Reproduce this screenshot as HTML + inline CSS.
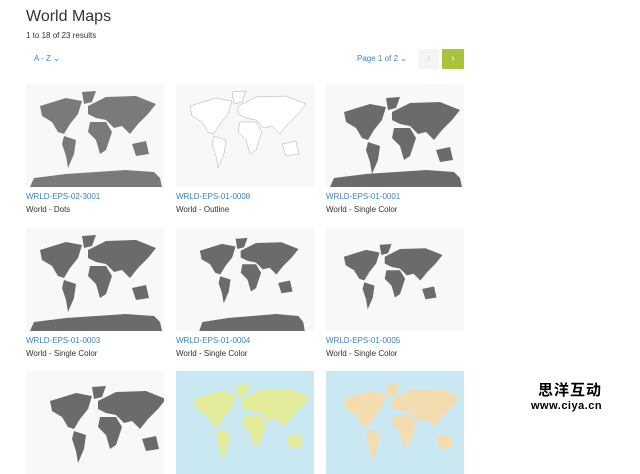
<!DOCTYPE html>
<html><head><meta charset="utf-8"><style>
body{margin:0;width:640px;height:421px;background:#fff;font-family:"Liberation Sans",sans-serif;overflow:hidden;position:relative}
.a{position:absolute}
h1{position:absolute;left:26px;top:8px;margin:0;font-size:16px;font-weight:normal;color:#333}
.card{position:absolute;width:138px}
.img{width:138px;height:103px;background:#f7f8f8;overflow:hidden}
.code{color:#3b82c6;font-size:8px;margin-top:5px}
.title{color:#333;font-size:8px;margin-top:4px}
svg{display:block}
</style></head><body>
<svg width="0" height="0" style="position:absolute">
<defs>
<g id="w">
<path d="M14,22 L40,14 L56,17 L52,30 L44,40 L38,50 L32,48 L26,38 L16,32 Z"/>
<path d="M56,8 L70,7 L66,18 L58,20 Z"/>
<path d="M38,52 L50,56 L48,70 L42,84 L40,72 L36,60 Z"/>
<path d="M62,22 L80,13 L110,12 L130,20 L122,30 L112,40 L104,50 L96,42 L88,44 L80,36 L70,34 L62,30 Z"/>
<path d="M64,38 L80,38 L86,48 L80,66 L74,70 L70,56 L62,48 Z"/>
<path d="M106,60 L120,57 L123,70 L110,72 Z"/>
</g>
<path id="ant" d="M4,103 L8,94 L40,90 L70,88 L100,86 L128,88 L134,94 L136,103 Z"/>
</defs></svg>
<h1>World Maps</h1>
<div class="a" style="left:26px;top:31px;font-size:8px;color:#333">1 to 18 of 23 results</div>
<div class="a" style="left:34px;top:54px;font-size:8px;color:#3b82c6">A - Z ⌄</div>
<div class="a" style="left:357px;top:54px;font-size:8px;color:#3b82c6">Page 1 of 2 ⌄</div>
<div class="a" style="left:418px;top:49px;width:21px;height:20px;background:#f5f5f5;color:#ccc;font-size:10px;text-align:center;line-height:20px">‹</div>
<div class="a" style="left:442px;top:49px;width:22px;height:20px;background:#a9c43a;color:#fff;font-size:10px;text-align:center;line-height:20px;border-radius:1px">›</div>

<div class="card" style="left:26px;top:84px"><div class="img"><svg width="138" height="103" viewBox="0 0 138 103" fill="#7a7a7a"><use href="#w"/><use href="#ant"/></svg></div><div class="code">WRLD-EPS-02-3001</div><div class="title">World - Dots</div></div>
<div class="card" style="left:176px;top:84px"><div class="img"><svg width="138" height="103" viewBox="0 0 138 103" fill="#fff" stroke="#aaa" stroke-width=".5"><use href="#w"/></svg></div><div class="code">WRLD-EPS-01-0008</div><div class="title">World - Outline</div></div>
<div class="card" style="left:326px;top:84px"><div class="img"><svg width="138" height="103" viewBox="0 0 138 103" fill="#6b6b6b"><use href="#w" transform="translate(4,6)"/><use href="#ant"/></svg></div><div class="code">WRLD-EPS-01-0001</div><div class="title">World - Single Color</div></div>

<div class="card" style="left:26px;top:228px"><div class="img"><svg width="138" height="103" viewBox="0 0 138 103" fill="#6b6b6b"><use href="#w"/><use href="#ant"/></svg></div><div class="code">WRLD-EPS-01-0003</div><div class="title">World - Single Color</div></div>
<div class="card" style="left:176px;top:228px"><div class="img"><svg width="138" height="103" viewBox="0 0 138 103" fill="#6b6b6b"><use href="#w" transform="translate(12,4) scale(.85)"/><use href="#ant" transform="translate(20,0) scale(.8,1)"/></svg></div><div class="code">WRLD-EPS-01-0004</div><div class="title">World - Single Color</div></div>
<div class="card" style="left:326px;top:228px"><div class="img"><svg width="138" height="103" viewBox="0 0 138 103" fill="#6b6b6b"><use href="#w" transform="translate(6,10) scale(.85)"/></svg></div><div class="code">WRLD-EPS-01-0005</div><div class="title">World - Single Color</div></div>

<div class="card" style="left:26px;top:371px"><div class="img"><svg width="138" height="103" viewBox="0 0 138 103" fill="#6b6b6b"><use href="#w" transform="translate(10,8)"/></svg></div></div>
<div class="card" style="left:176px;top:371px"><div class="img" style="background:#c9e8f2"><svg width="138" height="103" viewBox="0 0 138 103" fill="#e3ec9a"><use href="#w" transform="translate(4,6)"/></svg></div></div>
<div class="card" style="left:326px;top:371px"><div class="img" style="background:#c9e8f2"><svg width="138" height="103" viewBox="0 0 138 103" fill="#f3ddb0"><use href="#w" transform="translate(4,6)"/></svg></div></div>

<div class="a" style="left:538px;top:380px;font-family:'Noto Sans CJK SC',sans-serif;font-size:15px;font-weight:bold;color:#000;letter-spacing:1px;line-height:20px">思洋互动</div>
<div class="a" style="left:531px;top:400px;font-size:11px;font-weight:bold;color:#000;letter-spacing:.5px">www.ciya.cn</div>
</body></html>
